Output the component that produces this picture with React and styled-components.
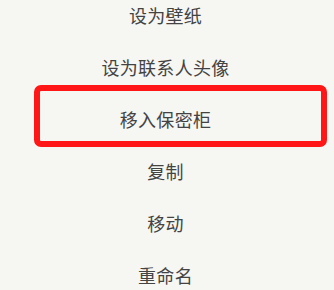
import React from 'react'
import styled, { createGlobalStyle } from 'styled-components'

const GlobalStyle = createGlobalStyle`
  html, body {
    margin: 0;
    padding: 0;
    background: #f6f6f2;
    overflow: hidden;
  }
`

const Menu = styled.ul`
  list-style: none;
  margin: -11px 0 0;
  padding: 0 3px 0 0;
  display: flex;
  flex-direction: column;
  font-family: "Noto Sans CJK SC", "Noto Sans", sans-serif;
`

const Item = styled.li`
  position: relative;
  height: 52px;
  display: flex;
  align-items: center;
  justify-content: center;
  font-size: 18px;
  color: #434343;
  letter-spacing: 0.3px;
`

const Highlight = styled.span`
  position: absolute;
  top: -8px;
  bottom: -2px;
  left: 34px;
  right: 4px;
  border: 6px solid #ff1616;
  border-radius: 7px;
  pointer-events: none;
`

const items = ['设为壁纸', '设为联系人头像', '移入保密柜', '复制', '移动', '重命名']

const App = () => {
  return (
    <>
      <GlobalStyle />
      <Menu>
        {items.map((label, i) => (
          <Item key={label}>
            {label}
            {i === 2 && <Highlight />}
          </Item>
        ))}
      </Menu>
    </>
  )
}

export default App
